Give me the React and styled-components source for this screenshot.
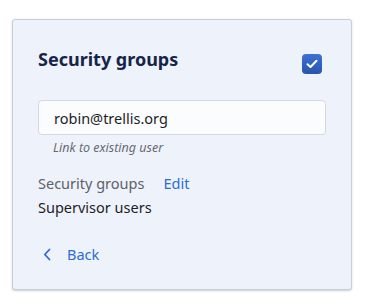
import React from 'react';
import styled, { createGlobalStyle } from 'styled-components';

const Global = createGlobalStyle`
  body {
    margin: 0;
    background: #ffffff;
    font-family: "Noto Sans", "Open Sans", sans-serif;
  }
`;

const Page = styled.div`
  padding: 19px 13px 13px 12px;
`;

const Card = styled.section`
  box-sizing: border-box;
  width: 340px;
  height: 271px;
  background: #eef2fb;
  border: 1px solid #c6ccd9;
  border-radius: 3px;
  box-shadow: 0 1px 2px rgba(60, 70, 90, 0.25);
  padding: 24px 25px 0 25px;
  display: flex;
  flex-direction: column;
`;

const Header = styled.div`
  display: flex;
  align-items: center;
  justify-content: space-between;
  padding-right: 4px;
`;

const Title = styled.h2`
  margin: 0;
  font-size: 18px;
  font-weight: 700;
  color: #15244a;
  line-height: 30px;
`;

const Check = styled.span`
  width: 20px;
  height: 20px;
  border-radius: 4px;
  background: linear-gradient(#3b72d4, #2955aa);
  display: flex;
  align-items: center;
  justify-content: center;
  margin-top: 10px;
`;

const Field = styled.div`
  margin-top: 26px;
  width: 288px;
  height: 35px;
  box-sizing: border-box;
  background: #fbfcfe;
  border: 1px solid #d3d8e2;
  border-radius: 4px;
  display: flex;
  align-items: center;
  padding-left: 15px;
  font-size: 14.5px;
  color: #1c1f26;
`;

const Hint = styled.div`
  margin: 4px 0 0 15px;
  font-size: 12.5px;
  font-style: italic;
  color: #676b73;
`;

const Row = styled.div`
  margin-top: 17px;
  display: flex;
  gap: 19px;
  font-size: 14.5px;
`;

const Label = styled.span`
  color: #5d6168;
`;

const Link = styled.span`
  color: #2b6ed3;
`;

const Value = styled.div`
  margin-top: 4px;
  font-size: 14.5px;
  color: #1c1f26;
`;

const Back = styled.div`
  margin-top: 27px;
  display: flex;
  align-items: center;
  gap: 16px;
  padding-left: 5px;
  font-size: 14.5px;
  color: #2b6ed3;
`;

export default function App() {
  return (
    <>
      <Global />
      <Page>
        <Card>
          <Header>
            <Title>Security groups</Title>
            <Check>
              <svg width="12" height="10" viewBox="0 0 12 10">
                <path d="M1.5 5.2 L4.5 8 L10.5 1.8" fill="none" stroke="#fff" strokeWidth="2" strokeLinecap="round" strokeLinejoin="round" />
              </svg>
            </Check>
          </Header>
          <Field>robin@trellis.org</Field>
          <Hint>Link to existing user</Hint>
          <Row>
            <Label>Security groups</Label>
            <Link>Edit</Link>
          </Row>
          <Value>Supervisor users</Value>
          <Back>
            <svg width="8" height="13" viewBox="0 0 8 13">
              <path d="M6.5 1.5 L1.8 6.5 L6.5 11.5" fill="none" stroke="#2b6ed3" strokeWidth="1.8" strokeLinecap="round" strokeLinejoin="round" />
            </svg>
            <span>Back</span>
          </Back>
        </Card>
      </Page>
    </>
  );
}
